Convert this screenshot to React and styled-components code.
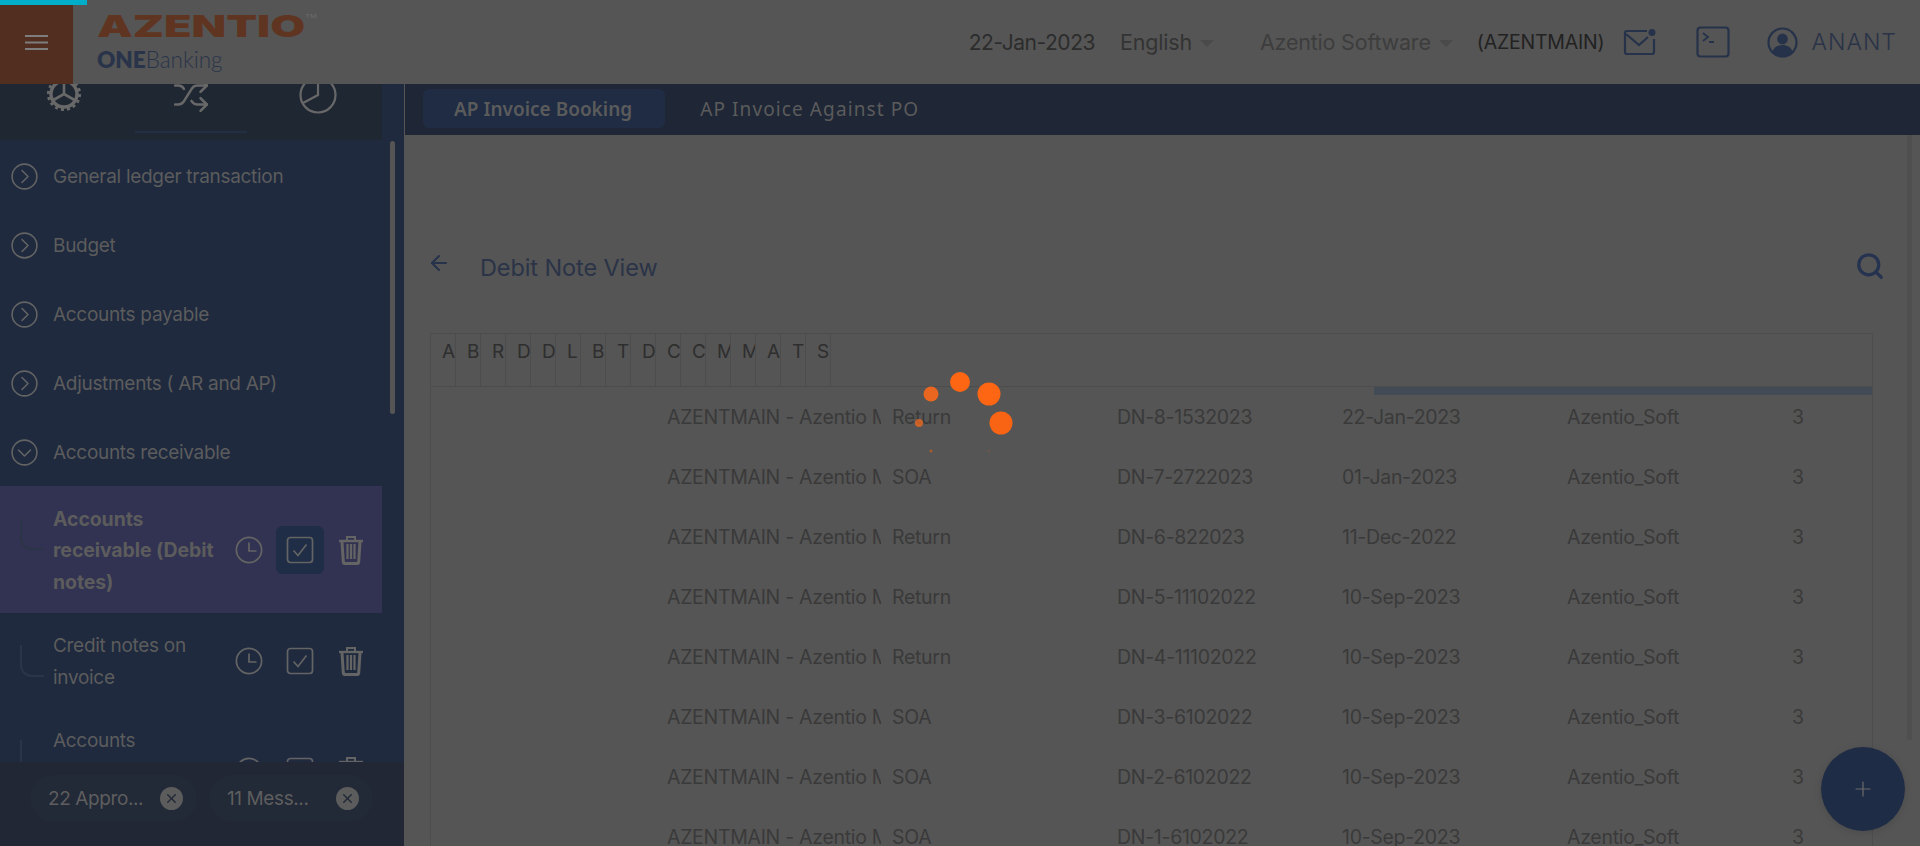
import styled, { createGlobalStyle } from 'styled-components';
import { ArrowLeft, Plus, Search, Shuffle, X } from 'lucide-react';

const GlobalStyle = createGlobalStyle`
  html, body {
    margin: 0;
    padding: 0;
    height: 100%;
    overflow: hidden;
    background: #555;
  }
  * { box-sizing: border-box; }
`;

const Page = styled.div`
  position: relative;
  width: 1920px;
  height: 846px;
  display: flex;
  flex-direction: column;
  overflow: hidden;
  background: #555;
  font-family: Inter, "Liberation Sans", sans-serif;
`;

const TopBar = styled.header`
  position: relative;
  z-index: 2;
  height: 84px;
  flex: none;
  display: flex;
  align-items: stretch;
  background: #555;
`;

const LoadBar = styled.div`
  position: absolute;
  left: 0;
  top: 0;
  width: 87px;
  height: 5px;
  background: #00aec9;
`;

const MenuBox = styled.div`
  width: 73px;
  margin-top: 5px;
  padding-bottom: 5px;
  display: flex;
  align-items: center;
  justify-content: center;
  background: #522e21;
  color: #7d7d7d;
`;

const Brand = styled.div`
  margin-left: 24px;
  padding-top: 9px;
  display: flex;
  flex-direction: column;
`;

const BrandName = styled.div`
  height: 35px;
  font-weight: 900;
  font-size: 30px;
  line-height: 34px;
  color: #5f3522;
  transform: scaleX(1.5);
  transform-origin: left center;
  white-space: nowrap;
  sup {
    font-size: 5px;
    font-weight: 400;
    color: #6b6b6b;
    vertical-align: 19px;
    line-height: 0;
  }
`;

const BrandSub = styled.div`
  margin-top: 3px;
  font-family: Lato, sans-serif;
  font-size: 22.5px;
  line-height: 26px;
  font-weight: 300;
  color: #29344a;
  b { font-weight: 800; }
`;

const TopRight = styled.div`
  margin-left: auto;
  display: flex;
  align-items: center;
  padding-right: 23px;
`;

const TopText = styled.span`
  font-size: ${(p) => p.$size || 21.5}px;
  color: ${(p) => p.$color || '#2c2c2c'};
  margin-left: ${(p) => p.$left || 0}px;
  font-weight: ${(p) => p.$weight || 400};
  letter-spacing: ${(p) => p.$track || -0.2}px;
  white-space: nowrap;
`;

const Caret = styled.i`
  width: 0;
  height: 0;
  margin-left: 8px;
  margin-top: 2px;
  border-left: 7px solid transparent;
  border-right: 7px solid transparent;
  border-top: 7px solid #4a4a4a;
`;

const TopIcon = styled.svg`
  display: block;
  margin-left: ${(p) => p.$left}px;
  color: #26324a;
  flex: none;
`;

const Body = styled.div`
  flex: 1;
  min-height: 0;
  display: flex;
`;

const Sidebar = styled.aside`
  position: relative;
  width: 404px;
  flex: none;
  display: flex;
  flex-direction: column;
  background: #1f2a3f;
`;

const SideTabs = styled.div`
  position: relative;
  width: 382px;
  height: 56px;
  flex: none;
  display: grid;
  grid-template-columns: repeat(3, 127px);
  background: #1f2733;
  overflow: hidden;
  color: #686868;
`;

const SideTab = styled.div`
  display: flex;
  justify-content: center;
  align-items: flex-start;
  margin-top: -8px;
`;

const TabLine = styled.div`
  position: absolute;
  left: 135px;
  top: 47px;
  width: 112px;
  height: 2px;
  background: #222e44;
`;

const SideScroll = styled.div`
  position: absolute;
  left: 390px;
  top: 57px;
  width: 5px;
  height: 273px;
  border-radius: 3px;
  background: #555;
`;

const MenuList = styled.nav`
  flex: 1;
  min-height: 0;
  overflow: hidden;
  padding-top: 1px;
`;

const Group = styled.div`
  height: 69px;
  width: 382px;
  display: flex;
  align-items: center;
  gap: 15px;
  padding: 2px 0 0 11px;
  font-size: 19px;
  letter-spacing: -0.3px;
  color: #5c5c5c;
  svg { color: #636363; flex: none; }
`;

const Leaf = styled.div`
  position: relative;
  width: 382px;
  padding: 17.5px 0 14.5px 53px;
  display: flex;
  align-items: center;
  background: ${(p) => (p.$active ? '#323352' : 'transparent')};
  font-size: ${(p) => (p.$active ? 19.5 : 19)}px;
  line-height: 31.5px;
  letter-spacing: ${(p) => (p.$active ? -0.1 : -0.3)}px;
  font-weight: ${(p) => (p.$active ? 700 : 400)};
  color: #5c5c5c;
`;

const Elbow = styled.span`
  position: absolute;
  left: 20px;
  top: 32px;
  width: 24px;
  height: 32px;
  border-left: 2px solid #2c3547;
  border-bottom: 2px solid #2c3547;
  border-bottom-left-radius: 12px;
`;

const LeafText = styled.div`
  width: 172px;
`;

const LeafTools = styled.div`
  position: absolute;
  left: 233px;
  top: 1px;
  bottom: 0;
  display: grid;
  grid-template-columns: 32px 48px 32px;
  column-gap: 11px;
  align-items: center;
  justify-items: center;
  color: #646464;
`;

const CheckWrap = styled.span`
  width: 48px;
  height: 48px;
  display: flex;
  align-items: center;
  justify-content: center;
  border-radius: 6px;
  background: ${(p) => (p.$on ? '#1f2d46' : 'transparent')};
`;

const Tray = styled.div`
  position: relative;
  z-index: 1;
  height: 84px;
  flex: none;
  display: flex;
  align-items: flex-start;
  gap: 12px;
  padding: 13px 0 0 30px;
  background: #212735;
`;

const Chip = styled.div`
  width: ${(p) => p.$w}px;
  height: 47px;
  display: flex;
  align-items: center;
  justify-content: space-between;
  padding: 0 14px 0 18px;
  border-radius: 24px;
  background: #222937;
  font-size: 19px;
  letter-spacing: -0.4px;
  color: #5e5e5e;
`;

const ChipClose = styled.span`
  width: 23px;
  height: 23px;
  border-radius: 50%;
  display: flex;
  align-items: center;
  justify-content: center;
  background: #5c5c5c;
  color: #222937;
`;

const Main = styled.main`
  flex: 1;
  min-width: 0;
  display: flex;
  flex-direction: column;
  padding-left: 1px;
`;

const Tabs = styled.div`
  height: 51px;
  flex: none;
  display: flex;
  gap: 35px;
  padding: 5px 0 0 18px;
  background: #1f2736;
  font-family: "Noto Sans", sans-serif;
  font-size: 19px;
`;

const Tab = styled.div`
  height: 39px;
  display: flex;
  align-items: center;
  padding: ${(p) => (p.$active ? '0 33px 0 31px' : '0')};
  border-radius: 6px;
  background: ${(p) => (p.$active ? '#1f2c44' : 'transparent')};
  font-weight: ${(p) => (p.$active ? 600 : 400)};
  letter-spacing: ${(p) => (p.$active ? 0 : 1.1)}px;
  color: #5b5b5b;
  white-space: nowrap;
`;

const Content = styled.div`
  flex: 1;
  min-height: 0;
  padding: 0 47px 0 25px;
`;

const TitleRow = styled.div`
  height: 198px;
  padding-top: 116px;
  display: flex;
  align-items: flex-start;
  color: #26324a;
`;

const BackIcon = styled.span`
  margin-left: -3px;
  display: block;
  line-height: 0;
`;

const Title = styled.h1`
  margin: -1px 0 0 29px;
  font-size: 23.5px;
  line-height: 36px;
  font-weight: 400;
  letter-spacing: -0.1px;
  color: #2a3347;
`;

const SearchBtn = styled.span`
  margin-left: auto;
  margin-right: -12px;
  color: #263350;
`;

const Table = styled.div`
  position: relative;
  border: 1px solid #4d4d4d;
  border-bottom: 0;
  height: 520px;
  overflow: hidden;
`;

const HeadRow = styled.div`
  height: 53px;
  display: flex;
  border-bottom: 1px solid #4d4d4d;
`;

const HeadCell = styled.div`
  width: 25px;
  flex: none;
  padding: 5px 0 0 11px;
  border-right: 1px solid #4d4d4d;
  overflow: hidden;
  font-size: 19px;
  line-height: 26px;
  color: #2e2e2e;
  white-space: nowrap;
`;

const HeadBar = styled.div`
  position: absolute;
  left: 943px;
  right: 0;
  top: 53px;
  height: 8px;
  background: #414a55;
`;

const Row = styled.div`
  height: 60px;
  display: grid;
  grid-template-columns: repeat(6, 225px) 1fr;
  align-items: center;
  padding-bottom: 1px;
  font-size: 19.5px;
  font-weight: 400;
  letter-spacing: -0.3px;
  color: #3a3a3a;
`;

const Cell = styled.div`
  padding-left: 11px;
  overflow: hidden;
  white-space: nowrap;
`;

const Fab = styled.div`
  position: absolute;
  left: 1821px;
  top: 747px;
  z-index: 3;
  width: 84px;
  height: 84px;
  border-radius: 50%;
  display: flex;
  align-items: center;
  justify-content: center;
  background: #1f2c46;
  color: #6b6b6b;
  box-shadow: 0 2px 8px rgba(0, 0, 0, 0.12);
`;

const PageScroll = styled.div`
  position: absolute;
  left: 1907px;
  top: 135px;
  width: 5px;
  height: 605px;
  background: #4f4f4f;
`;

const Spinner = styled.svg`
  position: absolute;
  left: 900px;
  top: 360px;
  z-index: 4;
`;

const GROUPS = ['General ledger transaction', 'Budget', 'Accounts payable', 'Adjustments ( AR and AP)'];
const HEADS = ['A', 'B', 'R', 'D', 'D', 'L', 'B', 'T', 'D', 'C', 'C', 'M', 'M', 'A', 'T', 'S'];
const ROWS = [
  ['Return', 'DN-8-1532023', '22-Jan-2023'],
  ['SOA', 'DN-7-2722023', '01-Jan-2023'],
  ['Return', 'DN-6-822023', '11-Dec-2022'],
  ['Return', 'DN-5-11102022', '10-Sep-2023'],
  ['Return', 'DN-4-11102022', '10-Sep-2023'],
  ['SOA', 'DN-3-6102022', '10-Sep-2023'],
  ['SOA', 'DN-2-6102022', '10-Sep-2023'],
  ['SOA', 'DN-1-6102022', '10-Sep-2023'],
];

const Burger = () => (
  <svg width="23" height="17" viewBox="0 0 23 17" fill="none" stroke="currentColor" strokeWidth="2">
    <path d="M0 2h23M0 8.500h23M0 15h23" />
  </svg>
);

const ChevronCircle = ({ down }) => (
  <svg width="27" height="27" viewBox="0 0 27 27" fill="none" stroke="currentColor" strokeWidth="1.6">
    <circle cx="13.5" cy="13.5" r="12.4" />
    <path d={down ? 'M7.5 11l6 6 6-6' : 'M11 7.5l6 6-6 6'} strokeLinecap="round" strokeLinejoin="round" />
  </svg>
);

const Gear = () => (
  <svg width="36" height="36" viewBox="0 0 36 36" fill="none" stroke="currentColor">
    <circle cx="18" cy="18" r="13" strokeWidth="3.4" />
    <circle cx="18" cy="18" r="15.6" strokeWidth="3" strokeDasharray="3 3.1" />
    <path d="M18 18V6M18 18L7.5 24M18 18l10.5 6" strokeWidth="2.6" />
  </svg>
);

const Pie = () => (
  <svg width="38" height="38" viewBox="0 0 38 38" fill="none" stroke="currentColor" strokeWidth="2.2">
    <circle cx="19" cy="19" r="17.5" />
    <path d="M19 2v17L4 27" />
  </svg>
);

const ClockIcon = () => (
  <svg width="28" height="28" viewBox="0 0 28 28" fill="none" stroke="currentColor" strokeWidth="1.7">
    <circle cx="14" cy="14" r="12.6" />
    <path d="M14 6.500V15h7.500" />
  </svg>
);

const CheckIcon = () => (
  <svg width="28" height="28" viewBox="0 0 28 28" fill="none" stroke="currentColor" strokeWidth="1.7">
    <rect x="1.500" y="1.500" width="25" height="25" rx="3" />
    <path d="M7.500 14.500l4.500 5 8.500-11" />
  </svg>
);

const Trash = () => (
  <svg width="26" height="30" viewBox="0 0 26 30" fill="none" stroke="currentColor" strokeWidth="3">
    <path d="M1 6h24" strokeWidth="2.4" />
    <path d="M9 5V2h8v3" strokeWidth="2" />
    <path d="M4 7l1.300 20c.1 1 .8 1.600 1.800 1.600h11.800c1 0 1.700-.6 1.800-1.600L22 7" />
    <path d="M9.500 9v15M13 9v15M16.500 9v15" strokeWidth="2.200" />
  </svg>
);

const LeafRow = ({ lines, active }) => (
  <Leaf $active={active}>
    <Elbow />
    <LeafText>{lines}</LeafText>
    <LeafTools>
      <ClockIcon />
      <CheckWrap $on={active}>
        <CheckIcon />
      </CheckWrap>
      <Trash />
    </LeafTools>
  </Leaf>
);

const App = () => (
  <Page>
    <GlobalStyle />
    <TopBar>
      <LoadBar />
      <MenuBox>
        <Burger />
      </MenuBox>
      <Brand>
        <BrandName>
          AZENTIO<sup>TM</sup>
        </BrandName>
        <BrandSub>
          <b>ONE</b>Banking
        </BrandSub>
      </Brand>
      <TopRight>
        <TopText $size={21} $track={-0.45}>22-Jan-2023</TopText>
        <TopText $left={25} $color="#333">English</TopText>
        <Caret />
        <TopText $left={46} $color="#3d3d3d">Azentio Software</TopText>
        <Caret />
        <TopText $size={19.5} $left={24} $color="#222">(AZENTMAIN)</TopText>
        <TopIcon $left={19} width="34" height="28" viewBox="0 0 34 28" fill="none" stroke="currentColor" strokeWidth="2.2">
          <path d="M24 3H4a2 2 0 0 0-2 2v19a2 2 0 0 0 2 2h25a2 2 0 0 0 2-2V11" />
          <path d="M3 6l13 11 9-8" />
          <circle cx="29" cy="4.5" r="3.5" fill="currentColor" stroke="none" />
        </TopIcon>
        <TopIcon $left={39} width="34" height="32" viewBox="0 0 34 32" fill="none" stroke="currentColor" strokeWidth="2.2">
          <rect x="1.5" y="1.5" width="31" height="29" rx="3" />
          <path d="M7 7l5 4-5 4M13 16h5" strokeWidth="1.8" />
        </TopIcon>
        <TopIcon $left={37} width="31" height="31" viewBox="0 0 31 31" fill="none" stroke="currentColor" strokeWidth="2.2">
          <circle cx="15.5" cy="15.5" r="14" />
          <circle cx="15.5" cy="12" r="5.4" fill="currentColor" stroke="none" />
          <path d="M5.5 25c1.5-5 5-7 10-7s8.500 2 10 7a14 14 0 0 1-20 0z" fill="currentColor" stroke="none" />
        </TopIcon>
        <TopText $size={23} $left={13} $color="#2a3347" $weight={300} $track={1}>ANANT</TopText>
      </TopRight>
    </TopBar>
    <Body>
      <Sidebar>
        <SideTabs>
          <SideTab><Gear /></SideTab>
          <SideTab><Shuffle size={38} strokeWidth={1.6} /></SideTab>
          <SideTab><Pie /></SideTab>
          <TabLine />
        </SideTabs>
        <SideScroll />
        <MenuList>
          {GROUPS.map((g) => (
            <Group key={g}>
              <ChevronCircle />
              {g}
            </Group>
          ))}
          <Group>
            <ChevronCircle down />
            Accounts receivable
          </Group>
          <LeafRow active lines="Accounts receivable (Debit notes)" />
          <LeafRow lines="Credit notes on invoice" />
          <LeafRow lines="Accounts receivable (Credit notes)" />
        </MenuList>
        <Tray>
          <Chip $w={167}>
            22 Appro...
            <ChipClose><X size={15} strokeWidth={2.4} /></ChipClose>
          </Chip>
          <Chip $w={164}>
            11 Mess...
            <ChipClose><X size={15} strokeWidth={2.4} /></ChipClose>
          </Chip>
        </Tray>
      </Sidebar>
      <Main>
        <Tabs>
          <Tab $active>AP Invoice Booking</Tab>
          <Tab>AP Invoice Against PO</Tab>
        </Tabs>
        <Content>
          <TitleRow>
            <BackIcon><ArrowLeft size={24} strokeWidth={2} /></BackIcon>
            <Title>Debit Note View</Title>
            <SearchBtn><Search size={30} strokeWidth={2.6} /></SearchBtn>
          </TitleRow>
          <Table>
            <HeadRow>
              {HEADS.map((h, i) => (
                <HeadCell key={i}>{h}</HeadCell>
              ))}
            </HeadRow>
            <HeadBar />
            {ROWS.map((r) => (
              <Row key={r[1]}>
                <Cell />
                <Cell>AZENTMAIN - Azentio Manage</Cell>
                <Cell>{r[0]}</Cell>
                <Cell>{r[1]}</Cell>
                <Cell>{r[2]}</Cell>
                <Cell>Azentio_Soft</Cell>
                <Cell>3</Cell>
              </Row>
            ))}
          </Table>
        </Content>
      </Main>
    </Body>
    <PageScroll />
    <Fab><Plus size={24} strokeWidth={1.2} /></Fab>
    <Spinner width="120" height="100" viewBox="0 0 120 100">
      <circle cx="19" cy="63" r="4" fill="#e8661f" opacity="0.8" />
      <circle cx="31" cy="34" r="7.500" fill="#e8661f" />
      <circle cx="60" cy="22" r="10" fill="#ff6614" />
      <circle cx="89" cy="34" r="11.500" fill="#ff6614" />
      <circle cx="101" cy="63" r="11.500" fill="#f96414" />
      <circle cx="31" cy="91" r="1.500" fill="#a85a30" />
      <circle cx="89" cy="91" r="0.800" fill="#8a5a3c" />
    </Spinner>
  </Page>
);

export default App;
